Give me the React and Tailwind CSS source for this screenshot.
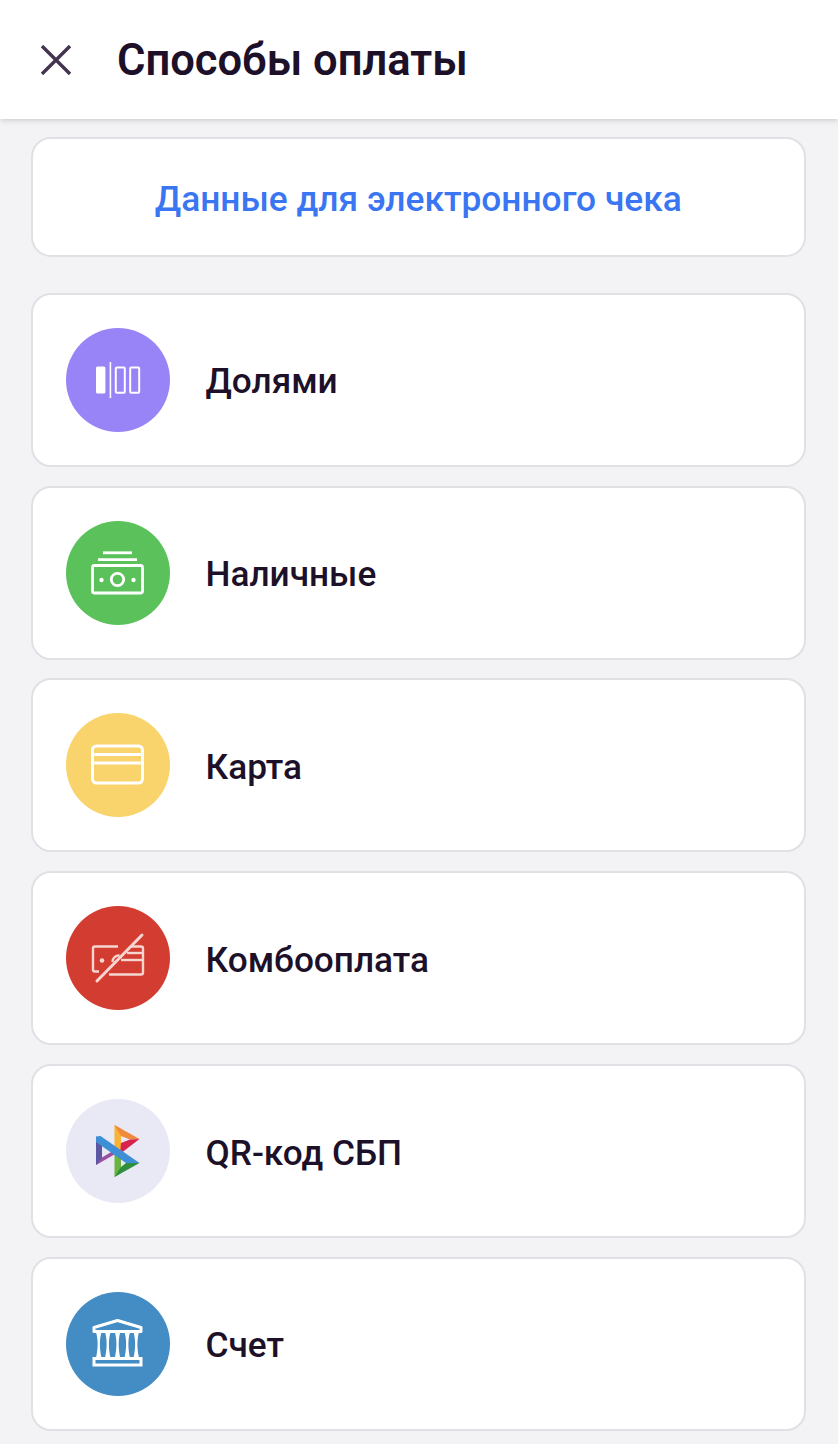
import React from 'react';

const DolyamiIcon = () => (
  <svg viewBox="6 6 104 104" className="w-full h-full">
    <rect x="36" y="44.5" width="9.4" height="27" rx="1.5" fill="#fff" />
    <rect x="49.6" y="40" width="1.6" height="36" fill="#fff" />
    <rect x="55.8" y="45.4" width="9" height="25.4" rx="1" fill="none" stroke="#fff" strokeWidth="2" />
    <rect x="70.2" y="45.4" width="9" height="25.4" rx="1" fill="none" stroke="#fff" strokeWidth="2" />
  </svg>
);

const CashIcon = () => (
  <svg viewBox="6 6 104 104" className="w-full h-full" fill="none" stroke="#fff" strokeWidth="2.8">
    <path d="M43 37.8h29" />
    <path d="M38 44.6h39" />
    <rect x="32.5" y="50.5" width="50" height="27.5" rx="2" />
    <circle cx="57.5" cy="64.5" r="6.2" />
    <circle cx="41.5" cy="65" r="2.2" fill="#fff" stroke="none" />
    <circle cx="73.5" cy="65" r="2.2" fill="#fff" stroke="none" />
  </svg>
);

const CardIcon = () => (
  <svg viewBox="6 6 104 104" className="w-full h-full" fill="none" stroke="#fff" strokeWidth="3">
    <rect x="32.5" y="39" width="50" height="37" rx="4" />
    <path d="M32.5 47.5h50" />
    <path d="M32.5 56h50" />
  </svg>
);

const ComboIcon = () => (
  <svg viewBox="6 6 104 104" className="w-full h-full" fill="none" stroke="#f6d5d1" strokeWidth="2.4">
    <path d="M58 46.5H35a2 2 0 0 0-2 2v21a2 2 0 0 0 2 2h4" />
    <path d="M71 46.5h10a2 2 0 0 1 2 2v24a2 2 0 0 1-2 2H49" />
    <path d="M83 53H67" />
    <path d="M83 60H61" />
    <path d="M52.5 62a6.5 6.5 0 0 1 7-6.5" />
    <circle cx="42" cy="60.5" r="2.3" fill="#f6d5d1" stroke="none" />
    <path d="M37 81L82 35" strokeWidth="3" strokeLinecap="round" />
  </svg>
);

const SbpIcon = () => (
  <svg viewBox="6 6 104 104" className="w-full h-full">
    <path d="M36 43.5V72L42 68V48Z" fill="#5b57a2" />
    <path d="M36 72L57 60L53 58L42 64.5Z" fill="#9a4fa0" />
    <path d="M54.5 32V58L61 61V36Z" fill="#f9b233" />
    <path d="M54.5 32L79.5 46L70 46.5L61 43Z" fill="#ef8a3c" />
    <path d="M60 61L79.5 46L70 46.5L61 50Z" fill="#d8234f" />
    <path d="M54.5 60V84L61 80V63Z" fill="#6cb33f" />
    <path d="M54.5 84L79.5 70L66 70L61 74Z" fill="#2f8f3e" />
    <path d="M36 43.5L40.5 43L79.5 70L66 70L36 49Z" fill="#3f8fd6" />
  </svg>
);

const BankIcon = () => (
  <svg viewBox="6 6 104 104" className="w-full h-full">
    <path d="M34 41.5L57.5 34.5L81 41.5V45.5H34Z" fill="none" stroke="#fff" strokeWidth="3" strokeLinejoin="round" />
    <path d="M36 46C38.2 54 38.2 62 36 72H41.5C39.4 62 39.4 54 41.5 46Z" fill="#fff" />
    <path d="M45 46C47.2 54 47.2 62 45 72H50.5C48.4 62 48.4 54 50.5 46Z" fill="#fff" />
    <path d="M54.8 46C57 54 57 62 54.8 72H60.2C58.2 62 58.2 54 60.2 46Z" fill="#fff" />
    <path d="M64.5 46C66.7 54 66.7 62 64.5 72H70C67.9 62 67.9 54 70 46Z" fill="#fff" />
    <path d="M73.5 46C75.7 54 75.7 62 73.5 72H79C76.9 62 76.9 54 79 46Z" fill="#fff" />
    <rect x="34" y="72.5" width="47" height="6.5" fill="none" stroke="#fff" strokeWidth="3" />
  </svg>
);

const methods = [
  { name: 'Долями', color: 'bg-[#9883f7]', Icon: DolyamiIcon },
  { name: 'Наличные', color: 'bg-[#5bc25b]', Icon: CashIcon },
  { name: 'Карта', color: 'bg-[#f9d36c]', Icon: CardIcon },
  { name: 'Комбооплата', color: 'bg-[#d33c30]', Icon: ComboIcon },
  { name: 'QR-код СБП', color: 'bg-[#e9e9f6]', Icon: SbpIcon },
  { name: 'Счет', color: 'bg-[#448cc4]', Icon: BankIcon },
];

const App = () => {
  return (
    <div className="w-[838px] h-[1444px] overflow-hidden bg-[#f3f3f6] font-['Roboto',sans-serif] text-[#1d1029]">
      <header className="h-[119px] bg-white flex items-center shadow-[0_1px_6px_rgba(0,0,0,0.18)] relative">
        <div className="w-[117px] pl-[41px]">
          <svg width="30" height="30" viewBox="0 0 30 30" fill="none" stroke="#43344f" strokeWidth="3.4" className="block">
            <path d="M1 1L29 29" />
            <path d="M29 1L1 29" />
          </svg>
        </div>
        <h1 className="text-[43.5px] font-semibold leading-none pt-[2px]">Способы оплаты</h1>
      </header>

      <main className="pl-[30.5px] pr-[32px] pt-[17.5px] flex flex-col">
        <button className="h-[120px] w-full bg-white border-2 border-[#e0e0e5] rounded-[20px] text-[35.3px] font-medium text-[#3a75f2] pt-[5px]">
          Данные для электронного чека
        </button>

        <div className="mt-[36.4px] flex flex-col gap-[18.8px]">
          {methods.map(({ name, color, Icon }) => (
            <div key={name} className="h-[174px] bg-white border-2 border-[#e0e0e5] rounded-[20px] flex items-center pl-[33.5px]">
              <div className={`w-[104px] h-[104px] rounded-full shrink-0 ${color}`}>
                <Icon />
              </div>
              <span className="ml-[35.5px] text-[35.2px] font-medium pt-[4px]">{name}</span>
            </div>
          ))}
        </div>
      </main>
    </div>
  );
};

export default App;
